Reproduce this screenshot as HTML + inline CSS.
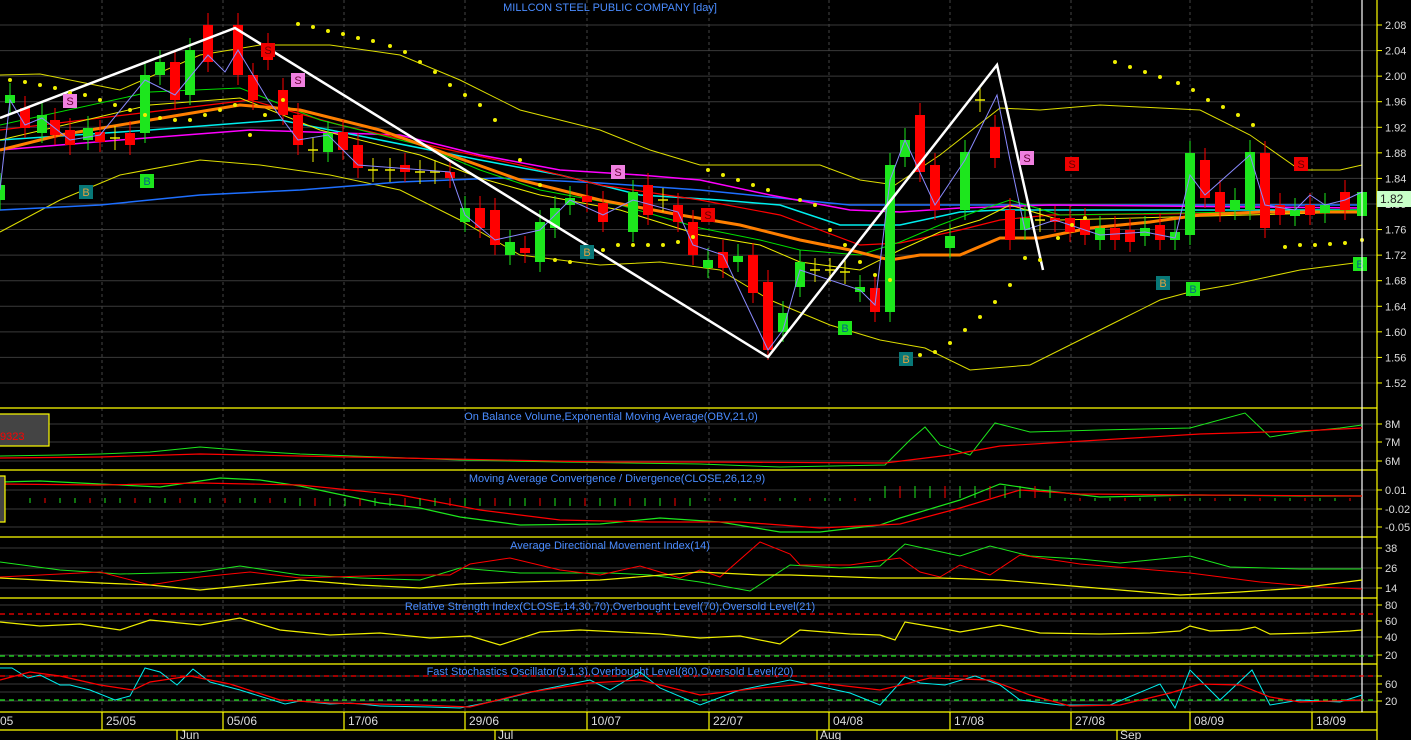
<!DOCTYPE html>
<html><head><meta charset="utf-8"><style>
html,body{margin:0;padding:0;background:#000;width:1411px;height:740px;overflow:hidden}
svg{display:block}
text{font-family:"Liberation Sans",sans-serif}
</style></head><body>
<svg id="s" width="1411" height="740" xmlns="http://www.w3.org/2000/svg">
<rect width="1411" height="740" fill="#000"/>
</svg>
<script>
var S=document.getElementById('s');var out='';
function py(p){return 25+(2.08-p)*639.25;}
function pl(pts,c,w,extra){out+='<polyline fill="none" stroke="'+c+'" stroke-width="'+(w||1)+'" '+(extra||'')+' points="'+pts.map(function(a){return a.join(',')}).join(' ')+'"/>';}
function ln(x1,y1,x2,y2,c,w,extra){out+='<line x1="'+x1+'" y1="'+y1+'" x2="'+x2+'" y2="'+y2+'" stroke="'+c+'" stroke-width="'+(w||1)+'" '+(extra||'')+'/>';}
function tx(x,y,t,c,sz,anch){out+='<text x="'+x+'" y="'+y+'" fill="'+c+'" font-size="'+(sz||11)+'" '+(anch?'text-anchor="'+anch+'"':'')+'>'+t+'</text>';}
var labels=['2.08','2.04','2.00','1.96','1.92','1.88','1.84','1.80','1.76','1.72','1.68','1.64','1.60','1.56','1.52'];
for(var i=0;i<labels.length;i++){var y=py(2.08-i*0.04);ln(0,y,1377,y,'#3a3a3a',1);ln(1377,y,1382,y,'#ff0',1);tx(1385,y+4,labels[i],'#ddd',11);}
function sub(arr){arr.forEach(function(a){ln(0,a[0],1377,a[0],'#3a3a3a',1);ln(1377,a[0],1382,a[0],'#ff0',1);if(a[1])tx(1385,a[0]+4,a[1],'#ddd',11);});}
sub([[424,'8M'],[442,'7M'],[461,'6M']]);
sub([[490,'0.01'],[509,'-0.02'],[527,'-0.05']]);
sub([[548,'38'],[568,'26'],[588,'14']]);
sub([[605,'80'],[621,'60'],[637,'40'],[655,'20']]);
sub([[676,''],[684,'60'],[692,''],[701,'20']]);
[102,223,344,465,587,709,829,950,1071,1190,1312].forEach(function(x){ln(x,0,x,712,'#444',1,'stroke-dasharray="3,3"');});
[408,470,537,598,664,712,730].forEach(function(y){ln(0,y,1377,y,'#ff0',1.2);});
ln(1377,0,1377,740,'#ff0',1.2);
[[102,'25/05'],[223,'05/06'],[344,'17/06'],[465,'29/06'],[587,'10/07'],[709,'22/07'],[829,'04/08'],[950,'17/08'],[1071,'27/08'],[1190,'08/09'],[1312,'18/09']].forEach(function(a){ln(a[0],712,a[0],730,'#ff0',1.2);tx(a[0]+4,725,a[1],'#ddd',12);});
tx(0,725,'05','#ddd',12);
[[177,'Jun'],[495,'Jul'],[817,'Aug'],[1117,'Sep']].forEach(function(a){ln(a[0],730,a[0],740,'#ff0',1.2);tx(a[0]+3,739,a[1],'#ddd',12);});
pl([[0,75],[40,74],[120,90],[200,55],[260,45],[330,45],[400,55],[460,80],[520,110],[600,130],[650,150],[700,165],[760,165],[820,165],[860,180],[895,185],[940,155],[1000,108],[1040,110],[1100,105],[1200,110],[1250,135],[1300,170],[1340,170],[1362,165]],'#dd0',1);
pl([[0,232],[60,200],[120,175],[200,160],[260,165],[330,175],[400,190],[460,220],[520,255],[600,265],[660,262],[720,270],[770,300],[830,325],[880,340],[925,348],[970,370],[1030,365],[1080,340],[1120,320],[1160,300],[1190,292],[1230,285],[1300,270],[1362,262]],'#dd0',1);
pl([[0,210],[100,205],[200,195],[300,190],[400,182],[500,178],[600,183],[700,190],[800,200],[850,205],[1000,205],[1362,205]],'#1e6fff',1.5);
pl([[0,150],[120,140],[250,130],[400,135],[480,155],[560,170],[640,175],[700,180],[770,195],[850,210],[900,212],[960,208],[1050,205],[1362,208]],'#f0f',1.5);
pl([[0,140],[150,130],[280,120],[380,140],[480,160],[560,175],[640,195],[720,200],[780,205],[840,225],[900,225],[960,212],[1000,210],[1050,210],[1362,210]],'#0ee',1.5);
pl([[0,130],[150,112],[250,100],[340,125],[450,150],[520,165],[600,185],[700,200],[780,215],[860,245],[900,243],[960,230],[1000,220],[1050,215],[1362,212]],'#f00',1.2);
pl([[0,125],[150,92],[240,88],[320,120],[420,145],[480,170],[540,190],[620,205],[700,228],[760,240],[800,250],[860,255],[900,242],[940,225],[980,210],[1010,200],[1060,215],[1362,210]],'#0d0',1);
pl([[0,140],[150,105],[240,98],[320,130],[420,155],[480,178],[540,195],[620,210],[700,235],[760,245],[800,262],[860,270],[900,250],[940,232],[980,220],[1010,205],[1060,220],[1362,212]],'#ee0',1);
pl([[0,150],[60,135],[150,120],[240,105],[300,110],[380,130],[450,155],[520,180],[600,200],[680,215],[740,225],[800,240],[850,250],[890,260],[920,255],[960,255],[1000,238],[1040,238],[1090,228],[1150,222],[1200,215],[1260,212],[1362,212]],'#ff7f00',3);
var C=[[0,185,200,'g'],[10,95,103,'g'],[25,108,128,'r'],[42,115,133,'g'],[55,120,135,'r'],[70,130,145,'r'],[88,128,140,'g'],[100,132,142,'r'],[130,133,145,'r'],[145,75,133,'g'],[160,62,75,'g'],[175,62,100,'r'],[190,50,95,'g'],[208,25,62,'r'],[238,25,75,'r'],[253,75,100,'r'],[268,45,60,'r'],[283,90,115,'r'],[298,115,145,'r'],[328,133,152,'g'],[343,132,150,'r'],[358,145,168,'r'],[405,165,172,'r'],[450,172,178,'r'],[465,208,222,'g'],[480,208,228,'r'],[495,210,245,'r'],[510,242,255,'g'],[525,248,253,'r'],[540,222,262,'g'],[555,208,228,'g'],[570,198,205,'g'],[587,196,202,'r'],[603,203,222,'r'],[633,192,232,'g'],[648,185,215,'r'],[678,205,222,'r'],[693,222,255,'r'],[708,260,268,'g'],[723,252,268,'r'],[738,256,262,'g'],[753,255,293,'r'],[768,282,350,'r'],[783,313,332,'g'],[800,262,287,'g'],[860,287,292,'g'],[875,288,312,'r'],[890,165,312,'g'],[905,140,157,'g'],[920,115,172,'r'],[935,165,210,'r'],[950,236,248,'g'],[965,152,210,'g'],[995,127,158,'r'],[1010,210,240,'r'],[1025,218,230,'g'],[1055,218,222,'r'],[1070,218,232,'r'],[1085,220,235,'r'],[1100,228,240,'g'],[1115,228,240,'r'],[1130,230,242,'r'],[1145,228,236,'g'],[1160,225,240,'r'],[1175,232,240,'g'],[1190,153,235,'g'],[1205,160,198,'r'],[1220,192,212,'r'],[1235,200,210,'g'],[1250,152,210,'g'],[1265,153,228,'r'],[1280,205,215,'r'],[1295,210,216,'g'],[1310,205,215,'r'],[1325,205,213,'g'],[1345,192,210,'r'],[1362,192,216,'g']];
C.forEach(function(c){var col=c[3]=='g'?'#1de61d':'#f00';ln(c[0],c[1]-12,c[0],c[2]+10,col,1);out+='<rect x="'+(c[0]-5)+'" y="'+c[1]+'" width="10" height="'+Math.max(3,c[2]-c[1])+'" fill="'+col+'"/>';});
[115,313,373,390,420,435,663,815,830,845,980,1040].forEach(function(x,i){var y=[138,150,170,170,172,172,200,270,270,272,100,220][i];ln(x-5,y,x+5,y,'#ee0',1.5);ln(x,y-12,x,y+12,'#ee0',1);});
pl([[0,190],[10,100],[25,125],[42,118],[70,140],[100,135],[145,80],[175,95],[208,55],[225,72],[238,50],[268,100],[298,140],[328,135],[358,165],[450,172],[465,215],[495,240],[540,230],[570,200],[603,215],[633,200],[678,212],[693,245],[723,255],[768,350],[783,330],[800,270],[860,290],[875,305],[890,180],[905,140],[935,205],[965,160],[997,95],[1010,160],[1025,230],[1055,220],[1100,235],[1145,232],[1175,238],[1190,175],[1205,195],[1250,155],[1265,205],[1295,210],[1310,195],[1325,205],[1345,200],[1362,192]],'#8a8aff',1);
pl([[0,118],[235,28],[768,357],[997,65],[1043,270]],'#fff',2.5);
var D=[[10,80],[25,82],[40,85],[55,88],[70,93],[85,95],[100,100],[115,105],[130,110],[145,115],[160,118],[175,120],[190,120],[205,115],[220,110],[235,105],[250,135],[265,115],[283,100],[298,24],[313,27],[328,31],[343,34],[358,38],[373,41],[390,46],[405,52],[420,62],[435,72],[450,85],[465,95],[480,105],[495,120],[520,160],[540,185],[555,260],[570,262],[603,250],[618,245],[633,245],[648,245],[663,245],[678,242],[693,237],[708,170],[723,175],[738,180],[753,185],[768,190],[800,200],[815,205],[830,230],[845,245],[860,262],[875,275],[890,280],[920,355],[935,352],[950,343],[965,330],[980,317],[995,302],[1010,285],[1025,258],[1040,260],[1058,238],[1072,225],[1085,218],[1115,62],[1130,67],[1145,72],[1160,77],[1178,83],[1193,90],[1208,100],[1223,107],[1238,115],[1253,125],[1285,247],[1300,245],[1315,245],[1330,244],[1345,243],[1362,240]];
D.forEach(function(d){out+='<circle cx="'+d[0]+'" cy="'+d[1]+'" r="2" fill="#ee0"/>';});
function mk(x,y,t,bg,fg){out+='<rect x="'+(x-7)+'" y="'+(y-7)+'" width="14" height="14" fill="'+bg+'"/>';tx(x,y+4,t,fg,11,'middle');}
[[70,101],[298,80],[618,172],[1027,158]].forEach(function(a){mk(a[0],a[1],'S','#f080e0','#603');});
[[268,50],[708,215],[1072,164],[1301,164]].forEach(function(a){mk(a[0],a[1],'S','#e00','#600');});
[[86,192],[587,252],[906,359],[1163,283]].forEach(function(a){mk(a[0],a[1],'B','#087878','#e0a040');});
[[147,181],[845,328],[1193,289],[1360,264]].forEach(function(a){mk(a[0],a[1],'B','#1de61d','#068');});
ln(1362,0,1362,712,'#fff',1.2);
out+='<rect x="1377" y="191" width="34" height="16" fill="#c8ffc8"/>';tx(1380,203,'1.82','#222',12);
tx(610,11,'MILLCON STEEL PUBLIC COMPANY [day]','#4a8cff',11,'middle');
tx(611,420,'On Balance Volume,Exponential Moving Average(OBV,21,0)','#4a8cff',11,'middle');
pl([[0,456],[60,455],[100,454],[150,452],[200,447],[250,451],[300,454],[380,457],[460,460],[560,462],[700,464],[780,467],[885,465],[910,440],[925,427],[940,445],[970,455],[995,423],[1030,432],[1100,430],[1190,428],[1245,413],[1270,437],[1300,432],[1340,428],[1362,425]],'#1de61d',1);
pl([[0,458],[100,457],[200,454],[300,456],[400,458],[500,460],[600,462],[700,462],[885,463],[950,455],[1000,446],[1100,440],[1200,434],[1300,431],[1362,428]],'#f00',1.2);
out+='<rect x="-2" y="414" width="51" height="32" fill="#444" stroke="#ff0" stroke-width="1.2"/>';tx(0,440,'9323','#f00',11);
tx(617,482,'Moving Average Convergence / Divergence(CLOSE,26,12,9)','#4a8cff',11,'middle');
pl([[0,482],[40,481],[100,484],[160,487],[220,478],[260,480],[300,486],[380,503],[420,508],[460,517],[520,525],[600,524],[660,518],[720,522],[780,532],[820,532],[880,525],[900,518],[960,500],[1000,484],[1040,490],[1100,497],[1200,495],[1300,496],[1362,496]],'#1de61d',1.2);
pl([[0,484],[100,485],[200,483],[300,485],[400,495],[480,510],[560,520],[650,522],[740,522],[820,528],[900,524],[960,508],[1020,490],[1080,494],[1200,495],[1362,496]],'#f00',1.2);
for(var x=30;x<1360;x+=15){var h=(x>880&&x<1060)?-12:((x<300)?5:(x<700?8:3));var col=(Math.floor(x/15)%3==0)?'#f00':'#1de61d';ln(x,498,x,498+h,col,1);}
out+='<rect x="-2" y="476" width="7" height="46" fill="#444" stroke="#ff0" stroke-width="1.2"/>';
tx(610,549,'Average Directional Movement Index(14)','#4a8cff',11,'middle');
pl([[0,562],[60,570],[120,574],[200,572],[240,566],[300,575],[360,578],[420,580],[460,568],[520,573],[560,573],[610,573],[650,575],[700,582],[750,591],[790,565],[840,568],[880,566],[905,544],[960,556],[990,546],[1030,556],[1080,559],[1120,563],[1190,556],[1230,567],[1300,569],[1362,569]],'#1de61d',1);
pl([[0,577],[100,572],[150,585],[200,577],[250,572],[300,578],[400,575],[450,575],[470,564],[510,558],[560,570],[600,575],[640,566],[680,578],[700,570],[720,577],[760,542],[790,554],[800,565],[850,565],[900,558],[920,572],[940,577],[960,565],[990,575],[1020,555],[1080,564],[1190,573],[1260,582],[1320,587],[1362,589]],'#f00',1);
pl([[0,578],[100,583],[150,585],[200,590],[300,580],[360,585],[420,588],[460,584],[520,582],[600,580],[700,572],[760,575],[790,575],[880,578],[940,578],[1000,580],[1060,585],[1120,590],[1180,595],[1240,592],[1300,588],[1362,580]],'#ee0',1.2);
tx(610,610,'Relative Strength Index(CLOSE,14,30,70),Overbought Level(70),Oversold Level(21)','#4a8cff',11,'middle');
ln(0,614,1377,614,'#f00',1.2,'stroke-dasharray="5,4"');ln(0,656,1377,656,'#1de61d',1.2,'stroke-dasharray="5,4"');
pl([[0,622],[40,626],[80,624],[120,630],[150,620],[200,625],[240,618],[280,630],[330,635],[380,633],[430,638],[470,636],[500,645],[540,632],[580,630],[620,632],[660,634],[700,638],[740,636],[780,644],[800,630],[850,634],[880,635],[895,640],[905,622],[940,628],[960,632],[1000,625],[1040,633],[1100,634],[1150,633],[1180,631],[1190,626],[1210,631],[1240,630],[1255,627],[1270,634],[1310,633],[1350,631],[1362,630]],'#ee0',1.2);
tx(610,675,'Fast Stochastics Oscillator(9,1,3),Overbought Level(80),Oversold Level(20)','#4a8cff',11,'middle');
ln(0,676,1377,676,'#f00',1.2,'stroke-dasharray="5,4"');ln(0,700,1377,700,'#1de61d',1.2,'stroke-dasharray="5,4"');
pl([[0,668],[12,668],[28,678],[40,675],[60,685],[70,685],[90,690],[115,700],[130,696],[145,668],[160,672],[177,685],[193,669],[210,682],[240,690],[285,704],[300,701],[330,704],[350,703],[380,706],[430,707],[460,708],[500,700],[540,690],[590,680],[610,690],[640,672],[660,688],[700,705],[740,690],[790,680],[850,693],[880,705],[905,677],[920,683],[945,685],[975,676],[1000,685],[1020,700],[1060,705],[1110,705],[1160,684],[1175,708],[1190,670],[1220,700],[1252,670],[1270,705],[1300,700],[1340,702],[1362,695]],'#0ee',1);
pl([[0,680],[30,672],[60,676],[100,685],[133,690],[150,682],[190,676],[230,684],[280,700],[330,703],[420,705],[470,707],[530,692],[590,683],[640,680],[700,695],[760,688],[820,683],[880,690],[930,678],[990,680],[1030,695],[1070,706],[1120,705],[1170,693],[1200,684],[1240,685],[1270,697],[1300,702],[1362,700]],'#f00',1.2);
S.insertAdjacentHTML('beforeend',out);
</script>
</body></html>
